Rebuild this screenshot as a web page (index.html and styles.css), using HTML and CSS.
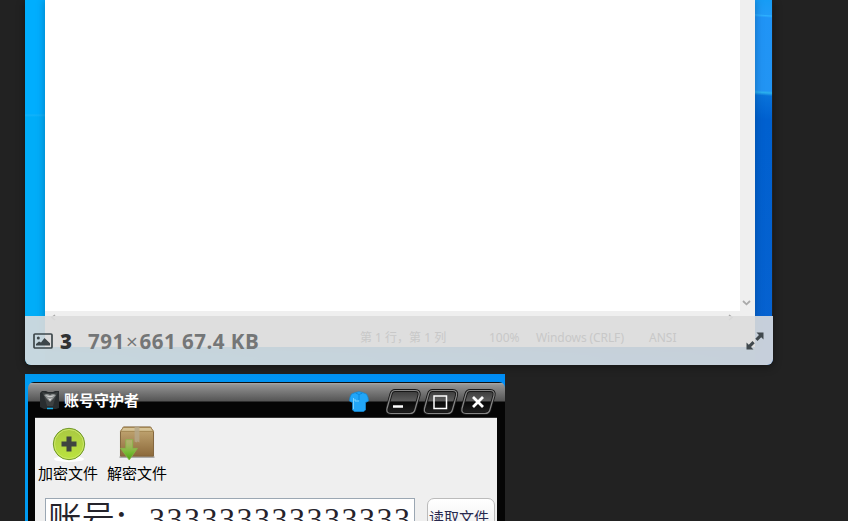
FILE: index.html
```
<!DOCTYPE html>
<html lang="zh-CN">
<head>
<meta charset="utf-8">
<title>账号守护者</title>
<link rel="stylesheet" href="styles.css">
</head>
<body>
<main class="page">
  <section class="preview">
    <div class="notepad">
      <div class="editor">
        <div class="paper"></div>
        <div class="scroll-y"><svg width="9" height="6" viewBox="0 0 9 6"><path d="M1 1l3.500 3.300L8 1" fill="none" stroke="#aaa" stroke-width="1.800"/></svg></div>
      </div>
      <div class="scroll-x"><svg width="5" height="7" viewBox="0 0 5 7"><path d="M4 1L1 3.500 4 6" fill="none" stroke="#aaa" stroke-width="1.500"/></svg><svg width="5" height="7" viewBox="0 0 5 7"><path d="M1 1l3 2.500L1 6" fill="none" stroke="#aaa" stroke-width="1.500"/></svg></div>
    </div>
    <div class="caption">
      <svg class="picture" width="20" height="16" viewBox="0 0 20 16"><rect x="1" y="1" width="18" height="14" rx="1" fill="none" stroke="#3d474b" stroke-width="1.700"/><circle cx="5.300" cy="5" r="1.500" fill="#3d474b"/><path d="M3 12.500V11l3-2.500 2 1L11.500 5 17 10.200v2.300z" fill="#3d474b"/></svg>
      <b class="count">3</b>
      <span class="size">791<span class="times">×</span>661 67.4 KB</span>
      <svg class="expand" width="18" height="18" viewBox="0 0 18 18"><path d="M10.500 .5h7v7l-2.300-2.300-3.700 3.700L9.300 6.700 13 3zM7.500 17.500h-7v-7l2.300 2.300 3.700-3.700 2.200 2.200L5 15z" fill="#40484d"/></svg>
    </div>
    <div class="status"><span class="line">第 1 行，第 1 列</span><span class="zoom">100%</span><span class="crlf">Windows (CRLF)</span><span class="ansi">ANSI</span></div>
  </section>

  <section class="desktop">
    <div class="app">
      <header class="titlebar">
        <svg class="logo" width="20" height="20" viewBox="0 0 20 20"><path d="M2 1h4l2 1h5l2-1h4v17l-3 1H4l-4-2V3z" fill="#292d2f"/><path d="M2 2l3 7 2 7h6l2-7 3-7-4 1H6z" fill="#3d4142"/><path d="M4 5q3-2 6 0 3-2 6 0l-3 4-3 3-3-3z" fill="#8d9191"/><path d="M5 5l5 1 5-1-3 2H8z" fill="#ccc"/><path d="M8 8l2 1 2-1-2 3z" fill="#ddd"/><path d="M7 18.500h6" stroke="#13aee9" stroke-width="1.500"/></svg>
        <h1>账号守护者</h1>
        <svg class="shirt" width="20" height="21" viewBox="0 0 20 21"><path d="M6.500 1.500Q10-.2 13.500 1.500l4 1.500q2 3 2 7l-3 1.500V19l-2 1.500h-9L3.500 19v-7.500l-3-1.500q0-4 2-7z" fill="#21a6f8" stroke="#1687cf" stroke-width=".8"/><path d="M6.500 2Q10 5 13.500 2M10 4v5" fill="none" stroke="#0b86dc"/><path d="M4.500 7v11M6 8v2h4" fill="none" stroke="#7bd3ff"/></svg>
        <svg class="controls" width="112" height="28" viewBox="0 0 112 28">
          <defs>
            <linearGradient id="glass" x2="0" y2="1"><stop stop-color="#3a3a3a"/><stop offset=".45" stop-color="#5d5d5d"/><stop offset=".5" stop-color="#080808"/><stop offset="1" stop-color="#202020"/></linearGradient>
            <path id="button-shape" d="M9 2.500h20q5 0 4 5l-4 14q-1 4-5 4H5q-5 0-4-5L5 6q1-3.500 4-3.500z"/>
          </defs>
          <g fill="url(#glass)" stroke="#171717" stroke-width="3"><use href="#button-shape"/><use href="#button-shape" x="37.500"/><use href="#button-shape" x="75"/></g>
          <g fill="none" stroke="#868686" stroke-width="1.200"><use href="#button-shape"/><use href="#button-shape" x="37.500"/><use href="#button-shape" x="75"/></g>
          <path d="M7 18.500h10" stroke="#fff" stroke-width="2.500"/><rect x="48" y="8" width="12.500" height="12.500" fill="none" stroke="#fff" stroke-width="1.500"/><path d="M87 9l10 10M97 9L87 19" stroke="#fff" stroke-width="2.800"/>
        </svg>
      </header>
      <div class="content">
        <nav class="tools">
          <div class="tool"><svg width="34" height="35" viewBox="0 0 34 35"><defs><linearGradient id="green" x2="0" y2="1"><stop stop-color="#a9c842"/><stop offset="1" stop-color="#bce43e"/></linearGradient></defs><ellipse cx="17" cy="32" rx="15" ry="3" fill="#fff"/><circle cx="17" cy="17" r="15.700" fill="url(#green)" stroke="#70972b"/><circle cx="17" cy="17" r="14.500" fill="none" stroke="#cbe66b"/><path d="M14.500 9.500h5v5h5v5h-5v5h-5v-5h-5v-5h5z" fill="#3f4440"/></svg><span>加密文件</span></div>
          <div class="tool box"><svg width="38" height="36" viewBox="0 0 38 36"><defs><linearGradient id="box" x2="0" y2="1"><stop stop-color="#c5aa76"/><stop offset="1" stop-color="#8c693a"/></linearGradient><linearGradient id="arrow" x2="0" y2="1"><stop stop-color="#c6dc91" stop-opacity=".4"/><stop offset=".6" stop-color="#79bb35"/><stop offset="1" stop-color="#4da111"/></linearGradient></defs><path d="M1 32h36" stroke="#aaa" stroke-width="2"/><path d="M5 1h28l3 5v25H2V6z" fill="url(#box)" stroke="#80633b"/><path d="M5 1.500h28l3 4H2z" fill="#d6c396" stroke="#a18451"/><path d="M16.500 1h5v16l-2-1-1 1-2-1z" fill="#b5a78b" opacity=".8"/><path d="M7.500 14h7v9h5l-8.500 12L2 23h5.500z" fill="url(#arrow)" stroke="#87b74a" stroke-width=".8"/></svg><span>解密文件</span></div>
        </nav>
        <div class="form">
          <div class="field"><span class="label">账号<span class="colon">：</span></span><span class="digits">333333333333333</span></div>
          <button>读取文件</button>
        </div>
      </div>
    </div>
  </section>
</main>
</body>
</html>
```
FILE: styles.css
```
* { box-sizing: border-box; }
body { margin: 0; background: #222; overflow: hidden; font-family: "Noto Sans", "Noto Sans CJK SC", sans-serif; }
svg { display: block; flex: none; }
.page { height: 521px; padding-left: 25px; overflow: hidden; }
.preview {
  position: relative; width: 748px; height: 365px; padding: 0 18px 0 20px; overflow: hidden;
  border-radius: 0 0 6px 6px;
  background:
    linear-gradient(#222, #222) 100% 0 / 1px 316px no-repeat,
    linear-gradient(176deg, #00aefe 113px, #14b3fa 115px, #00adf8 117px) 0 0 / 20px 365px no-repeat,
    linear-gradient(184deg, #169cf5 0, #219cf7 15px, #2db1ff 16px, #2094f6 18px, #2294f3 91px, #2ab0ee 93px, #0872da 96px, #0060cf 120px, #0762d0 365px) 100% 0 / 18px 365px no-repeat,
    linear-gradient(90deg, #00a7ed, #0068ca);
  background: 
    linear-gradient(#222, #222) 100% 0 / 1px 316px no-repeat,
    linear-gradient(#00aefe 114px, #14b3fa 115px, #00adf8 117px) 0 0 / 20px 365px no-repeat,
    linear-gradient(184deg, #169cf5 0, #219cf7 15px, #2db1ff 16px, #2094f6 18px, #2294f3 91px, #2ab0ee 93px, #0872da 96px, #0060cf 120px, #0762d0 365px) 100% 0 / 18px 365px no-repeat,
    linear-gradient(90deg, #00a7ed, #0068ca);
  box-shadow: 0 2px 8px rgba(0,0,0,.4);
}
.notepad { width: 710px; height: 347px; background: #efefef; box-shadow: 0 0 8px rgba(0,50,90,.4); }
.editor { display: flex; height: 311px; }
.paper { width: 695px; background: #fff; }
.scroll-y { display: flex; flex: 1; align-items: flex-end; padding: 0 0 5px 2px; }
.scroll-x { display: flex; justify-content: space-between; padding: 3px 22px 0 6px; }
.caption {
  position: absolute; left: 0; right: 0; top: 316px; height: 49px;
  display: flex; align-items: center; padding: 0 9px 0 8px;
  background: rgba(220,220,220,.9); color: #303233;
  font: 700 20.5px/49px "Open Sans", sans-serif;
}
.count, .size { position: relative; top: 1px; }
.count { margin-left: 7px; }
.size { margin-left: 16px; color: #747677; letter-spacing: .5px; }
.times { font-weight: 400; margin: 0 1.3px; }
.expand { margin-left: auto; }
.status { position: absolute; left: 335px; top: 329px; display: flex; color: #c8c8c8; font-size: 12px; line-height: 18px; white-space: nowrap; }
.line { width: 129px; }
.zoom { width: 47px; }
.crlf { width: 113px; letter-spacing: -.1px; }
.desktop { width: 480px; height: 147px; margin-top: 9px; padding: 8px 0 0 3px; background: linear-gradient(90deg, #009bf2, #008df5); overflow: hidden; }
.app { height: 139px; padding: 0 8px 0 7px; border-radius: 6px 6px 0 0; background: linear-gradient(#111 1px, #aaa 1px, #929292 3px, #555 19px, #050505 20px); }
.titlebar { display: flex; height: 36px; border-bottom: 1px solid #333; }
.logo { margin: 8px 0 0 5px; }
h1 { margin: 7px 0 0 4px; color: #fff; font: 700 15px/22px "Noto Sans CJK SC", sans-serif; white-space: nowrap; }
.shirt { margin: 9px 0 0 auto; }
.controls { margin: 6px -1px 0 17px; }
.content { width: 462px; height: 103px; background: #efefef; overflow: hidden; }
.tools { display: flex; height: 80px; padding: 9px 0 0 3px; }
.tool { display: flex; width: 60px; flex-direction: column; align-items: center; }
.tool svg { height: 35px; margin-left: 1px; }
.tool span { font: 15px/22px "Noto Sans CJK SC", sans-serif; white-space: nowrap; }
.box { margin-left: 9px; }
.box svg { margin: -1px 0 1px; }
.form { display: flex; padding-left: 10px; }
.field { display: flex; width: 370px; height: 60px; padding-left: 2px; border: 1px solid #9ba7b3; background: #fff; color: #25232b; white-space: nowrap; }
.label { width: 101px; overflow: hidden; font: 350 33.5px/34px "Noto Sans CJK SC", sans-serif; }
.colon { position: relative; top: 3px; left: -2px; }
.digits { font: 32px/40px "Liberation Serif", serif; letter-spacing: 1.5px; }
button { display: flex; width: 68px; height: 50px; margin-left: 12px; padding: 9px 4px 0 0; justify-content: center; align-items: flex-start; border: 1px solid #bbb; border-radius: 7px; background: linear-gradient(#fff, #e8e8e8); color: #28284e; font: 15px/18px "Noto Sans CJK SC", sans-serif; white-space: nowrap; }
```
